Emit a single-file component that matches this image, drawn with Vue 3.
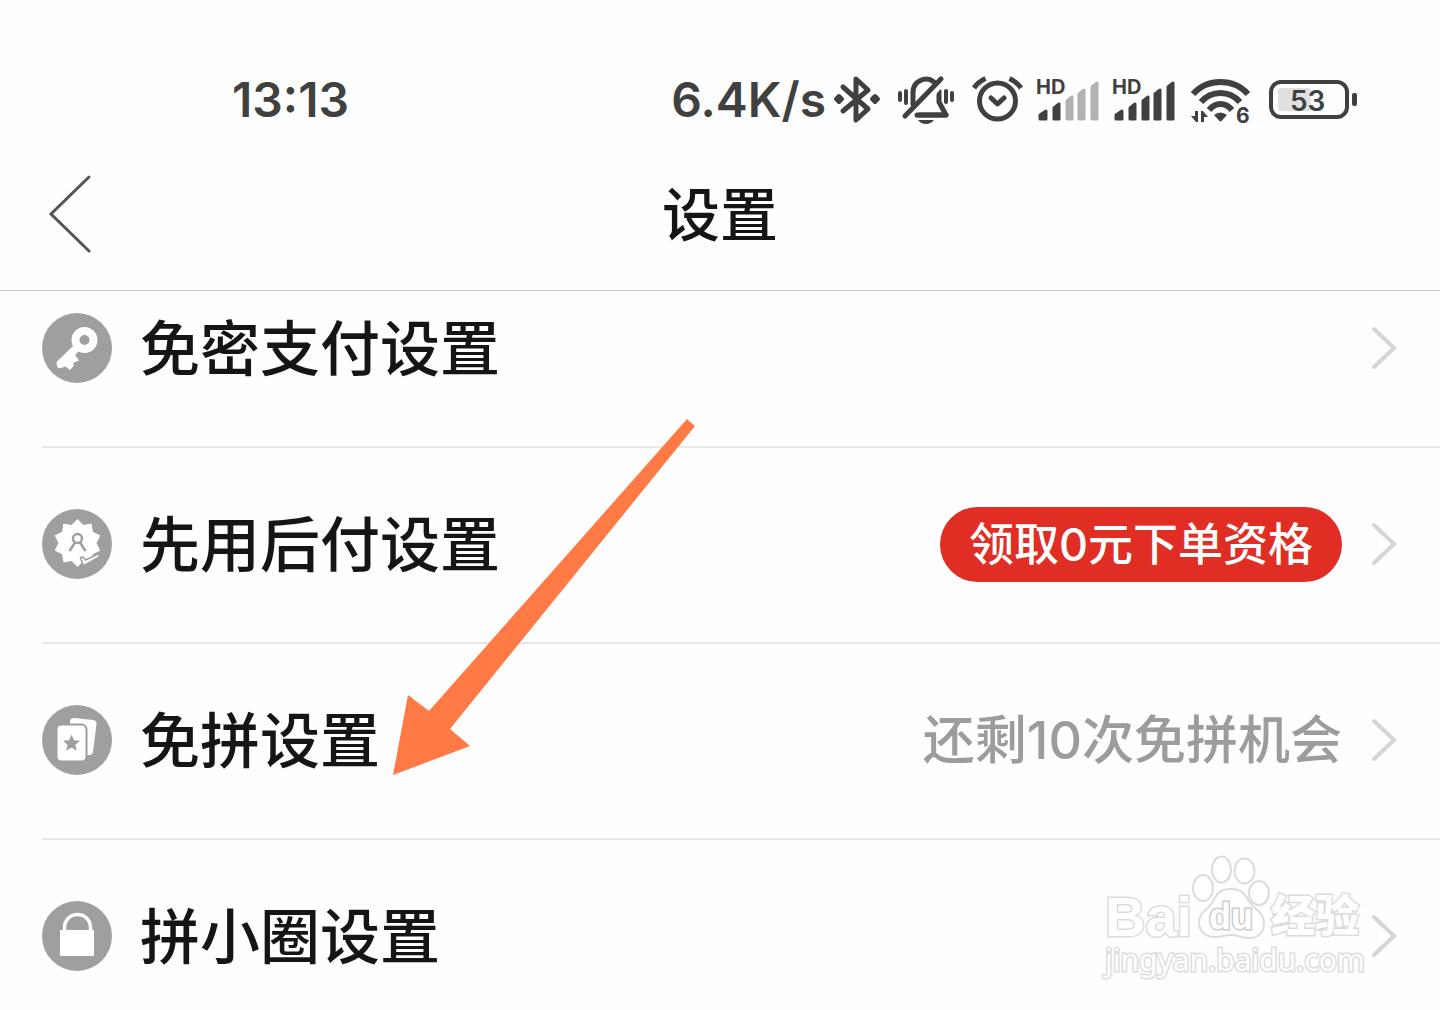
<template>
  <div class="screen">
    <header class="header">
      <!-- 状态栏 -->
      <div class="status-bar">
        <span class="status-text">13:13</span>
        <div class="status-icons">
          <div class="network">
            <span class="status-text">6.4K/s</span>
            <svg width="52" height="52" viewBox="0 0 52 52" aria-label="蓝牙">
              <path class="line" stroke-width="5" d="M9 13 34 35 22 46V5L34 16 9 37" />
              <path class="line solid" stroke-width="4" d="M5 22 8 25 5 28 2 25zM41 22 44 25 41 28 38 25z" />
            </svg>
          </div>
          <svg width="62" height="52" viewBox="0 0 62 52" aria-label="静音">
            <path class="line" stroke-width="5" d="M15 30V18A13 13 0 0 1 36 8M41 17V28L48 41H19" />
            <path d="M46 8 10 46" stroke="#fff" stroke-width="5" />
            <path class="line" stroke-width="5" d="M43 5 7 42M19 41H48" />
            <path class="line" stroke-width="4" d="M2 19V26M8 17V29M48 17V28M54 19V26" />
            <path class="solid" d="M20 46H36Q33 50 28 50T20 46" />
          </svg>
          <svg width="51" height="52" viewBox="0 0 51 52" aria-label="闹钟">
            <circle class="line" cx="25.500" cy="27" r="18" stroke-width="5" />
            <path class="line" stroke-width="5" d="M19 24 25.500 30 32 24" />
            <path class="line butt" stroke-width="5" d="M2 14Q6 8 13.500 4.500M37.500 4.500Q45 8 49 14" />
          </svg>
          <svg v-for="sim in sims" :key="sim.id" width="64" height="52" viewBox="0 0 64 52" aria-label="信号">
            <text class="svg-text" x="1" y="20" font-size="20">HD</text>
            <path
              v-for="(bar, i) in signalBars"
              :key="i"
              class="bar"
              :class="{ weak: i >= sim.level }"
              :d="bar"
            />
          </svg>
          <svg width="68" height="52" viewBox="0 0 68 52" aria-label="无线网络">
            <path class="line butt" stroke-width="6" d="M6 20Q17 8 33.500 8T61 20M14 28Q22 19 33.500 19T53 28M22 36Q27 30 33.500 30T45 36" />
            <path class="solid" d="M27 41Q33.500 36 40 41L34.500 47Q33.500 48 32.500 47z" />
            <path class="solid" d="M8 37h3v11H9L4 42h4zM14 48V37h2l5 6h-4v5z" />
            <text class="svg-text" x="49" y="49" font-size="21">6</text>
          </svg>
          <svg width="90" height="52" viewBox="0 0 90 52" aria-label="电量">
            <rect x="11" y="14" width="33" height="23" rx="3" fill="#e0e0e0" />
            <rect class="line" x="4" y="8" width="76" height="35" rx="10" stroke-width="4" />
            <rect class="solid" x="85" y="19" width="5" height="13" rx="2" />
            <text class="svg-text battery-text" x="23" y="37" font-size="28">53</text>
          </svg>
        </div>
      </div>

      <!-- 标题栏 -->
      <div class="nav-bar">
        <button type="button" class="btn-back" aria-label="返回">
          <svg width="44" height="78" viewBox="0 0 44 78">
            <path d="M42 2 4 39 42 76" />
          </svg>
        </button>
        <h1 class="title">设置</h1>
      </div>
    </header>

    <!-- 设置列表 -->
    <ul class="list">
      <li v-for="item in items" :key="item.icon">
        <a href="#" class="row">
          <svg class="row-icon" width="70" height="70" viewBox="0 0 70 70">
            <circle cx="35" cy="35" r="35" fill="#9f9f9f" />
            <g v-if="item.icon === 'key'">
              <circle cx="42.500" cy="27" r="9" fill="none" stroke="#fff" stroke-width="8" />
              <path d="M31 33 15 48.500Q14 50 15 53Q16 56 19 55L23.500 53.500 28 57 32 52.500 31 50 37 47.500 33 42 38 37z" fill="#fff" />
            </g>
            <g v-else-if="item.icon === 'later'">
              <polygon :points="burst" fill="#fff" />
              <g fill="none" stroke="#9f9f9f" stroke-width="2.500">
                <circle cx="35.500" cy="29.500" r="4.500" />
                <path d="M33 33.500 27.500 42M38 33.500 43.500 42" />
              </g>
              <path
                d="M38.500 48.500 41 48 43.500 51 55 45.500Q58 45 57 48L43 56H41z"
                fill="#fff"
                stroke="#9f9f9f"
                stroke-width="1.500"
              />
            </g>
            <g v-else-if="item.icon === 'card'">
              <path d="M32 13 51 15Q55 15.500 54.500 19L51 47Q50.500 50 47 50H38V22H28V16Q28.500 13 32 13z" fill="#fff" />
              <rect x="14.500" y="19.500" width="30" height="37" rx="5" fill="#fff" stroke="#9f9f9f" stroke-width="2" />
              <polygon :points="star" fill="#9f9f9f" />
            </g>
            <g v-else>
              <path d="M22.500 30V26.500a13 13 0 0 1 26 0V30" fill="none" stroke="#fff" stroke-width="3.500" />
              <rect x="18" y="29" width="34" height="26" rx="1" fill="#fff" />
            </g>
          </svg>
          <span class="row-name">{{ item.name }}</span>
          <span v-if="item.badge" class="badge">{{ item.badge }}</span>
          <span v-if="item.tip" class="tip">{{ item.tip }}</span>
          <svg class="chevron" width="24" height="42" viewBox="0 0 24 42">
            <path d="M2 2 22 21 2 40" />
          </svg>
        </a>
      </li>
    </ul>

    <!-- 指示箭头 -->
    <svg class="arrow" width="302" height="356" viewBox="0 0 302 356">
      <path d="M294 0 302 7 57 310 77 327 0 356 15 276 36 292z" />
    </svg>

    <!-- 水印 -->
    <svg class="watermark" width="270" height="136" viewBox="0 0 270 136">
      <text class="wm-latin" x="5" y="86" font-size="56">Bai</text>
      <ellipse cx="103" cy="38" rx="10" ry="13" />
      <ellipse cx="121.500" cy="19.500" rx="9.500" ry="13" />
      <ellipse cx="144.500" cy="21" rx="10" ry="12.500" />
      <ellipse cx="159" cy="43" rx="10" ry="12" />
      <path d="M131 39C118 39 115 47 112 53C108 60 99 62 99 72C99 82 106 87 115 87C121 87 125 85 131 85S143 88 150 88C158 88 164 82 164 73C164 62 155 60 150 53C146 46 143 39 131 39z" />
      <text class="wm-du" x="109" y="79" font-size="36">du</text>
      <text class="wm-cjk" x="171" y="82" font-size="44">经验</text>
      <text class="wm-url" x="5" y="121" font-size="30">jingyan.baidu.com</text>
    </svg>
  </div>
</template>

<script setup>
const items = [
  { icon: 'key', name: '免密支付设置' },
  { icon: 'later', name: '先用后付设置', badge: '领取0元下单资格' },
  { icon: 'card', name: '免拼设置', tip: '还剩10次免拼机会' },
  { icon: 'lock', name: '拼小圈设置' }
]

const sims = [
  { id: 1, level: 2 },
  { id: 2, level: 5 }
]

const signalBars = [
  'M5 45V41L11 37V45z',
  'M19 45V34L24 30V45z',
  'M32 45V27L37 23V45z',
  'M44 45V20L49 16V45z',
  'M57 45V13L62 9V45z'
]

// 生成星形顶点
function starPoints(cx, cy, outer, inner, count) {
  const points = []
  for (let i = 0; i < count * 2; i++) {
    const r = i % 2 ? inner : outer
    const angle = (Math.PI * i) / count - Math.PI / 2
    points.push(`${cx + r * Math.cos(angle)},${cy + r * Math.sin(angle)}`)
  }
  return points.join(' ')
}

const burst = starPoints(35.5, 34, 24, 19, 10)
const star = starPoints(29.5, 38.5, 9, 4, 5)
</script>

<style>
body {
  margin: 0;
  background: #fefefe;
}
</style>

<style scoped>
.screen {
  position: relative;
  height: 100vh;
  overflow: hidden;
  background: #fefefe;
  font-family: "Noto Sans CJK SC", sans-serif;
}

svg {
  overflow: visible;
}

.header {
  position: relative;
  z-index: 1;
  padding-top: 62px;
  background: #fefefe;
  border-bottom: 1px solid #ccc;
}

.status-bar {
  display: flex;
  align-items: center;
  justify-content: space-between;
  height: 76px;
  padding: 0 83px 0 232px;
}

.status-icons {
  display: flex;
  align-items: center;
  gap: 12px;
}

.network {
  display: flex;
  align-items: center;
  gap: 8px;
}

.status-text {
  font-family: Inter, sans-serif;
  font-size: 48px;
  font-weight: 600;
  line-height: 56px;
  color: #404040;
}

.line {
  fill: none;
  stroke: #404040;
  stroke-linecap: round;
  stroke-linejoin: round;
}

.line.butt {
  stroke-linecap: butt;
}

.solid {
  fill: #404040;
}

.bar {
  fill: #404040;
  stroke: #404040;
  stroke-width: 3;
  stroke-linejoin: round;
}

.bar.weak {
  fill: #b2b2b2;
  stroke: #b2b2b2;
}

.svg-text {
  font-family: Inter, sans-serif;
  font-weight: 700;
  fill: #404040;
}

.battery-text {
  font-weight: 600;
}

.nav-bar {
  display: grid;
  grid-template-columns: 1fr auto 1fr;
  align-items: center;
  height: 152px;
  padding: 0 47px;
}

.btn-back {
  display: flex;
  justify-self: start;
  padding: 0;
  border: none;
  background: none;
  cursor: pointer;
}

.btn-back path {
  fill: none;
  stroke: #555;
  stroke-width: 3;
  stroke-linecap: round;
}

.title {
  margin: 0;
  padding-bottom: 6px;
  font-size: 58px;
  font-weight: 500;
  line-height: 80px;
  color: #151515;
}

/* 列表已向上滚动，首行部分位于标题栏下方 */
.list {
  margin: -39px 0 0;
  padding: 0 0 0 42px;
  list-style: none;
}

.row {
  display: flex;
  align-items: center;
  height: 192px;
  padding: 0 44px 2px 0;
  border-bottom: 2px solid #e8e8e8;
  color: #151515;
  text-decoration: none;
}

.row-icon {
  flex: none;
  margin-right: 28px;
}

.row-name {
  flex: 1;
  padding-bottom: 6px;
  font-size: 60px;
  font-weight: 500;
  line-height: 80px;
}

.badge {
  padding: 0 29px;
  border-radius: 38px;
  background: #e02e24;
  color: #fff;
  font-family: Inter, "Noto Sans CJK SC", sans-serif;
  font-size: 45px;
  font-weight: 500;
  line-height: 75px;
}

.tip {
  font-family: Inter, "Noto Sans CJK SC", sans-serif;
  font-size: 52px;
  font-weight: 500;
  line-height: 75px;
  color: #9c9c9c;
}

.chevron {
  flex: none;
  margin-left: 30px;
}

.chevron path {
  fill: none;
  stroke: #d5d5d5;
  stroke-width: 4;
  stroke-linecap: round;
}

.arrow {
  position: absolute;
  top: 419px;
  left: 393px;
  z-index: 2;
  fill: #ff7a45;
  pointer-events: none;
}

.watermark {
  position: absolute;
  top: 850px;
  right: 70px;
  z-index: 2;
  fill: #fff;
  stroke: #dcdcdc;
  stroke-width: 2;
  pointer-events: none;
}

.watermark text {
  paint-order: stroke;
  stroke-width: 3;
}

.wm-latin,
.wm-du {
  font-family: "Liberation Sans", sans-serif;
  font-weight: 700;
}

.watermark .wm-du {
  stroke: #ccc;
}

.wm-cjk {
  font-family: "Noto Sans CJK SC", sans-serif;
  font-weight: 900;
}

.wm-url {
  font-family: "Noto Sans", sans-serif;
}
</style>
